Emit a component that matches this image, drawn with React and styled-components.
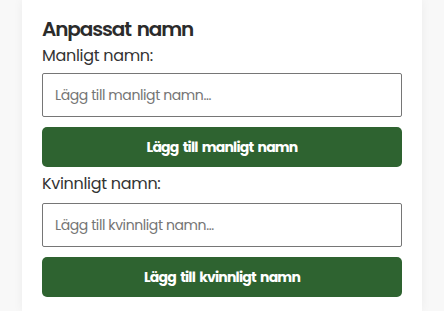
import React from 'react'
import styled, { createGlobalStyle } from 'styled-components'

const GlobalStyle = createGlobalStyle`
    body {
        margin: 0;
        background: #f8f8f8;
        font-family: Poppins, "Open Sans", "Noto Sans", sans-serif;
        color: #333;
    }
`

const Card = styled.section`
    width: 400px;
    margin: 0 auto;
    min-height: 311px;
    box-sizing: border-box;
    padding: 17px 20px 0;
    background: #fff;
    box-shadow: 0 0 10px rgba(0, 0, 0, 0.05);
    display: flex;
    flex-direction: column;
`

const Title = styled.h2`
    margin: 0;
    font-size: 20px;
    line-height: 24px;
    font-weight: 600;
    letter-spacing: -1.1px;
    word-spacing: 2px;
    color: #2b2b2b;
`

const Label = styled.label`
    display: block;
    margin-top: ${p => p.$gap}px;
    font-size: 16px;
    line-height: 24px;
    letter-spacing: -0.3px;
    color: #333;
`

const Input = styled.input`
    box-sizing: border-box;
    width: 100%;
    height: 44px;
    margin-top: ${p => p.$gap}px;
    padding: 0 12px;
    border: 1px solid #767676;
    border-radius: 2px;
    font-family: inherit;
    font-size: 14px;
    letter-spacing: -0.4px;
    color: #333;
    outline: none;

    &::placeholder {
        color: #757575;
    }
`

const Button = styled.button`
    width: 100%;
    height: 40px;
    margin-top: 10px;
    border: none;
    border-radius: 5px;
    background: #2e6330;
    color: #fff;
    font-family: inherit;
    font-size: 14px;
    font-weight: 700;
    letter-spacing: -0.8px;
    word-spacing: 2px;
    cursor: pointer;
`

const NameField = ({ label, placeholder, action, labelGap, inputGap }) => (
    <>
        <Label $gap={labelGap}>{label}</Label>
        <Input $gap={inputGap} placeholder={placeholder} />
        <Button>{action}</Button>
    </>
)

const App = () => (
    <>
        <GlobalStyle />
        <Card>
            <Title>Anpassat namn</Title>
            <NameField
                label="Manligt namn:"
                placeholder="Lägg till manligt namn..."
                action="Lägg till manligt namn"
                labelGap={3}
                inputGap={5}
            />
            <NameField
                label="Kvinnligt namn:"
                placeholder="Lägg till kvinnligt namn..."
                action="Lägg till kvinnligt namn"
                labelGap={5}
                inputGap={7}
            />
        </Card>
    </>
)

export default App
